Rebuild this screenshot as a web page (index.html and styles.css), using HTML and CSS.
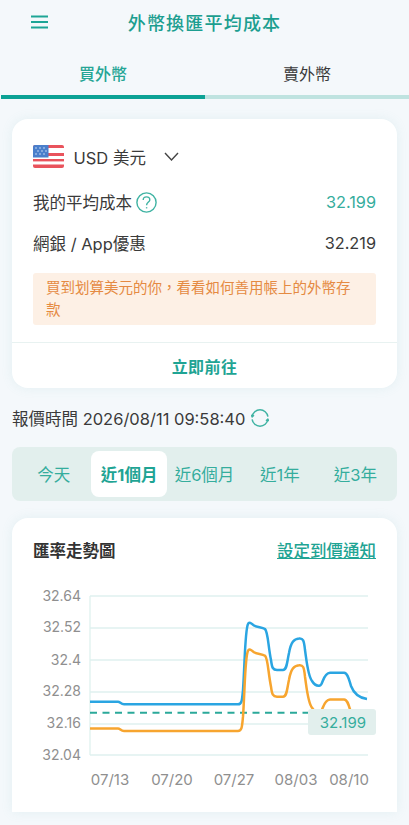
FILE: index.html
```html
<!DOCTYPE html>
<html lang="zh-Hant">
<head>
<meta charset="utf-8">
<title>外幣換匯平均成本</title>
<link rel="stylesheet" href="styles.css">
</head>
<body>
<header class="topbar">
  <svg class="menu-icon" viewBox="0 0 18 14" aria-hidden="true"><path d="M0 1.5H17M0 7H17M0 12.5H17"/></svg>
  <h1 class="page-title">外幣換匯平均成本</h1>
</header>
<nav class="tabs">
  <div class="tab tab-active">買外幣</div>
  <div class="tab">賣外幣</div>
</nav>
<section class="card summary">
  <div class="summary-body">
    <div class="currency">
      <svg class="flag" viewBox="0 0 31 23" aria-hidden="true">
        <rect width="31" height="23" rx="2" fill="#fff"/>
        <path d="M2 0H29a2 2 0 0 1 2 2V3H0V2a2 2 0 0 1 2-2Z" fill="#e9535c"/>
        <rect y="8" width="31" height="3" fill="#e9535c"/>
        <rect y="14" width="31" height="2.4" fill="#e9535c"/>
        <path d="M0 19.5H31V21a2 2 0 0 1-2 2H2a2 2 0 0 1-2-2Z" fill="#e9535c"/>
        <path d="M2 0H15.5V12.5H0V2a2 2 0 0 1 2-2Z" fill="#4a7fcb"/>
        <g fill="#cfe0f5"><circle cx="3" cy="3" r=".8"/><circle cx="7" cy="3" r=".8"/><circle cx="11" cy="3" r=".8"/><circle cx="5" cy="6" r=".8"/><circle cx="9" cy="6" r=".8"/><circle cx="13" cy="6" r=".8"/><circle cx="3" cy="9" r=".8"/><circle cx="7" cy="9" r=".8"/><circle cx="11" cy="9" r=".8"/></g>
      </svg>
      <span class="currency-name">USD 美元</span>
      <svg class="chevron" viewBox="0 0 15 9" aria-hidden="true"><path d="M1 1L7.5 8L14 1"/></svg>
    </div>
    <div class="rate-row rate-first">
      <span class="rate-label">我的平均成本
        <svg class="help-icon" viewBox="0 0 21 21" aria-hidden="true"><circle cx="10.5" cy="10.5" r="9.6"/><path d="M7.2 8C7.2 6 8.8 4.9 10.5 4.9C12.3 4.9 13.8 6.1 13.8 7.9C13.8 10 10.6 10.2 10.6 13.2"/><path d="M10.6 15.2V16.4"/></svg>
      </span>
      <span class="rate-value rate-accent">32.199</span>
    </div>
    <div class="rate-row rate-second">
      <span class="rate-label">網銀 / App優惠</span>
      <span class="rate-value">32.219</span>
    </div>
    <p class="notice">買到划算美元的你，看看如何善用帳上的外幣存款</p>
  </div>
  <div class="summary-action">立即前往</div>
</section>
<div class="quote-time">
  <span>報價時間 2026/08/11 09:58:40</span>
  <svg class="refresh-icon" viewBox="0 0 18 18" aria-hidden="true"><path d="M1.1 7.6A8 8 0 0 1 16.9 7.6"/><path d="M16.9 10.4A8 8 0 0 1 1.1 10.4"/><path d="M3 6.2L1.2 7.8L.2 5.8M15 11.8L16.8 10.2L17.8 12.2"/></svg>
</div>
<div class="ranges">
  <div class="range">今天</div>
  <div class="range range-active">近1個月</div>
  <div class="range">近6個月</div>
  <div class="range">近1年</div>
  <div class="range">近3年</div>
</div>
<section class="card trend">
  <div class="trend-head">
    <h2 class="trend-title">匯率走勢圖</h2>
    <a class="trend-link">設定到價通知</a>
  </div>
  <svg class="chart" viewBox="12 562 385 250" role="img" aria-label="匯率走勢圖">
    <g class="grid">
      <path d="M90 596H368M90 628H368M90 660H368M90 692H368M90 724H368M90 755H368M90 596V755"/>
    </g>
    <g class="y-labels">
      <text x="81" y="601">32.64</text>
      <text x="81" y="632">32.52</text>
      <text x="81" y="665">32.4</text>
      <text x="81" y="696">32.28</text>
      <text x="81" y="728">32.16</text>
      <text x="81" y="760">32.04</text>
    </g>
    <g class="x-labels">
      <text x="110" y="785">07/13</text>
      <text x="172" y="785">07/20</text>
      <text x="234" y="785">07/27</text>
      <text x="296" y="785">08/03</text>
      <text x="349" y="785">08/10</text>
    </g>
    <path class="dash" d="M90 712.7H308"/>
    <path class="line line-blue" d="M90 701.7H118C120 701.7 121 704.3 124 704.3H238C242 704.3 242 700 243 690C245 660 245 630 248 624C249 621.5 251 623 254 625.5C257 627.5 262 627 265 629C268 632 268 645 271 660C272 668 273 670 277 670H283C287 670 287 662 289 653C291 642 294 639 299 638.5C303 638 304 640 305 650C307 664 308 676 312 681C315 686 318 686 320 685.5C323 685 323 673 330 672.7H344C348 673 349 680 351 686C354 694 360 698 367 699"/>
    <path class="line line-orange" d="M90 728.4H118C120 728.4 121 731 124 731H238C242 731 242 726.7 243 716.7C245 686.7 245 656.7 248 650.7C249 648.2 251 649.7 254 652.2C257 654.2 262 653.7 265 655.7C268 658.7 268 671.7 271 686.7C272 694.7 273 696.7 277 696.7H283C287 696.7 287 688.7 289 679.7C291 668.7 294 665.7 299 665.2C303 664.7 304 666.7 305 676.7C307 690.7 308 702.7 312 707.7C315 712.7 318 712.7 320 712.2C323 711.7 323 699.7 330 699.4H344C348 699.7 349 706.7 351 712.7C354 720.7 360 724.7 367 725.7"/>
    <rect class="tag" x="308" y="709" width="68" height="26" rx="3"/>
    <text class="tag-text" x="366" y="727.5">32.199</text>
  </svg>
</section>
</body>
</html>
```
FILE: styles.css
```css
* { box-sizing: border-box; }
html, body { margin: 0; padding: 0; }
body {
  width: 409px;
  height: 825px;
  overflow: hidden;
  background: #f4f8fb;
  color: #333;
  font-family: Inter, "Noto Sans CJK TC", sans-serif;
}
.topbar {
  position: relative;
  height: 44px;
  display: flex;
  align-items: center;
  justify-content: center;
}
.menu-icon {
  position: absolute;
  left: 31px;
  top: 15px;
  width: 18px;
  height: 14px;
  fill: none;
  stroke: #1ea596;
  stroke-width: 2;
}
.page-title {
  margin: 0;
  font-size: 18px;
  letter-spacing: 1.2px;
  font-weight: 500;
  color: #1c9e90;
}
.tabs {
  display: flex;
  margin: 0 0 20px;
  padding-left: 1px;
}
.tab {
  flex: 1;
  height: 55px;
  padding-top: 7px;
  display: flex;
  align-items: center;
  justify-content: center;
  font-size: 16px;
  color: #3a3a3a;
  border-bottom: 4px solid #bfe3e0;
}
.tab-active {
  color: #25a595;
  font-weight: 500;
  border-bottom-color: #0ca295;
}
.card {
  margin: 0 12px;
  background: #fff;
  border-radius: 16px;
  box-shadow: 0 0 12px rgba(110, 185, 185, .12);
}
.summary { height: 269px; }
.summary-body {
  padding: 26px 21px 17px;
  border-bottom: 1px solid #e8f2f1;
}
.currency {
  display: flex;
  align-items: center;
  height: 23px;
}
.flag { width: 31px; height: 23px; }
.currency-name {
  margin-left: 9.5px;
  font-size: 16.5px;
  color: #3a3a3a;
}
.chevron {
  margin-left: 18.5px;
  width: 15px;
  height: 9px;
  fill: none;
  stroke: #444;
  stroke-width: 1.4;
}
.rate-row {
  display: flex;
  justify-content: space-between;
  align-items: center;
  height: 24px;
  font-size: 16.5px;
  color: #3a3a3a;
}
.rate-first { margin-top: 22px; }
.rate-second { margin-top: 17px; }
.rate-value { font-size: 16.3px; }
.rate-label { display: flex; align-items: center; gap: 4px; }
.rate-accent { color: #35ad9d; }
.help-icon {
  width: 21px;
  height: 21px;
  fill: none;
  stroke: #3fb3a3;
  stroke-width: 1.4;
}
.notice {
  margin: 18px 0 0;
  padding: 4px 13px;
  height: 52px;
  background: #fdf0e5;
  border-radius: 3px;
  font-size: 14.5px;
  line-height: 22px;
  color: #e58a42;
}
.summary-action {
  height: 45px;
  display: flex;
  align-items: center;
  justify-content: center;
  font-size: 16px;
  letter-spacing: .4px;
  font-weight: 700;
  color: #1fa494;
}
.quote-time {
  display: flex;
  align-items: center;
  gap: 6px;
  height: 24px;
  margin: 18px 12px 17px;
  font-size: 16.5px;
  color: #3a3a3a;
}
.refresh-icon {
  width: 18px;
  height: 18px;
  fill: none;
  stroke: #3fb3a3;
  stroke-width: 1.5;
}
.ranges {
  display: grid;
  grid-template-columns: repeat(5, 1fr);
  margin: 0 12px 17px;
  padding: 4px;
  height: 54px;
  background: #e2efed;
  border-radius: 8px;
}
.range {
  display: flex;
  align-items: center;
  justify-content: center;
  font-size: 16.5px;
  color: #35ad9d;
  border-radius: 8px;
}
.range-active {
  background: #fff;
  color: #1fa494;
  font-weight: 700;
}
.trend {
  height: 294px;
  border-radius: 16px 16px 0 0;
  padding-top: 20px;
}
.trend-head {
  display: flex;
  justify-content: space-between;
  align-items: center;
  height: 24px;
  padding: 0 21px;
}
.trend-title {
  margin: 0;
  font-size: 16.5px;
  font-weight: 700;
  color: #333;
}
.trend-link {
  font-size: 16.5px;
  font-weight: 500;
  color: #1fa494;
  text-decoration: underline;
}
.chart {
  display: block;
  width: 385px;
  height: 250px;
}
.grid path {
  fill: none;
  stroke: #dff1ef;
  stroke-width: 1.3;
}
.y-labels text {
  font-size: 14px;
  fill: #8f8f8f;
  text-anchor: end;
}
.x-labels text {
  font-size: 15px;
  fill: #8f8f8f;
  text-anchor: middle;
}
.dash {
  fill: none;
  stroke: #2ba99a;
  stroke-width: 2;
  stroke-dasharray: 7 5.5;
}
.line {
  fill: none;
  stroke-width: 2.5;
  stroke-linejoin: round;
}
.line-blue { stroke: #2aa5e2; }
.line-orange { stroke: #f7a52f; }
.tag { fill: #e2efed; }
.tag-text {
  font-size: 15px;
  fill: #35ad9d;
  text-anchor: end;
}
```
